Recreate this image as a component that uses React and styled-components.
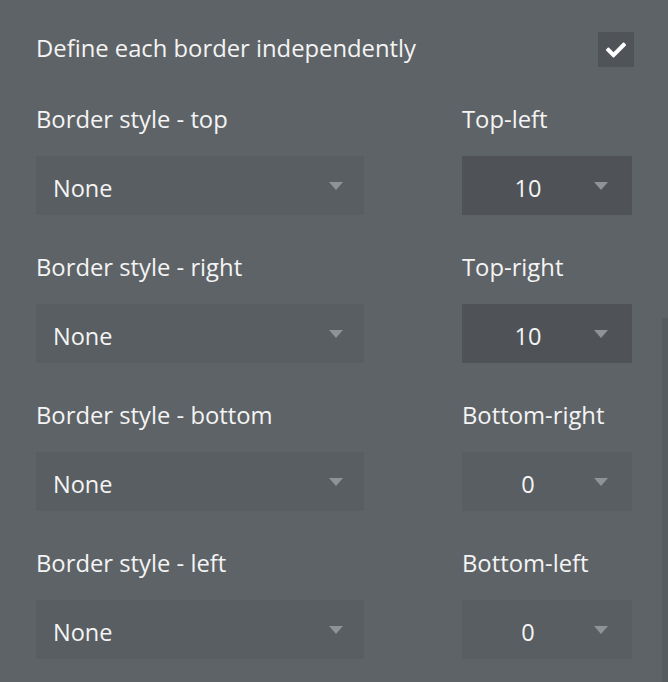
import React from 'react';
import styled, { createGlobalStyle } from 'styled-components';
import { FaCheck } from 'react-icons/fa';

const GlobalStyle = createGlobalStyle`
  html, body {
    margin: 0;
    padding: 0;
    background: #5e6367;
  }
  body {
    font-family: "Open Sans", "Noto Sans", sans-serif;
    color: #f4f4f4;
  }
`;

const Panel = styled.div`
  position: relative;
  width: 668px;
  height: 682px;
  box-sizing: border-box;
  padding: 32px 36px 0 36px;
  background: #5e6367;
  overflow: hidden;
`;

const Scrollbar = styled.div`
  position: absolute;
  right: 0;
  top: 318px;
  bottom: 0;
  width: 6px;
  background: #575b5f;
`;

const ToggleRow = styled.div`
  display: flex;
  align-items: center;
  justify-content: space-between;
  height: 35px;
  margin-bottom: 37px;
`;

const Label = styled.div`
  font-size: 23.8px;
  line-height: 30px;
  margin-top: ${p => (p.$raised ? '-3px' : '0')};
`;

const Checkbox = styled.div`
  width: 36px;
  height: 35px;
  margin-right: -2px;
  background: #505458;
  display: flex;
  align-items: center;
  justify-content: center;
  color: #fff;
  font-size: 20px;
`;

const Grid = styled.div`
  display: grid;
  grid-template-columns: 328px 170px;
  justify-content: space-between;
  row-gap: 37px;
`;

const Field = styled.div`
  display: flex;
  flex-direction: column;
  gap: 22px;
`;

const Select = styled.div`
  height: 59px;
  box-sizing: border-box;
  display: flex;
  align-items: center;
  background: ${p => (p.$dark ? '#4f5357' : '#595e62')};
  padding: 0 ${p => (p.$center ? '24px' : '21px')} 0 ${p => (p.$center ? '0' : '17px')};
  font-size: 23.5px;
`;

const Value = styled.span`
  flex: 1;
  text-align: ${p => (p.$center ? 'center' : 'left')};
  margin-top: 4px;
`;

const Arrow = styled.span`
  width: 0;
  height: 0;
  border-left: 7px solid transparent;
  border-right: 7px solid transparent;
  border-top: 8px solid #8f9396;
  margin-top: 1px;
`;

const rows = [
  { side: 'Border style - top', corner: 'Top-left', radius: '10', dark: true },
  { side: 'Border style - right', corner: 'Top-right', radius: '10', dark: true },
  { side: 'Border style - bottom', corner: 'Bottom-right', radius: '0', dark: false },
  { side: 'Border style - left', corner: 'Bottom-left', radius: '0', dark: false },
];

function Dropdown({ value, center, dark }) {
  return (
    <Select $center={center} $dark={dark}>
      <Value $center={center}>{value}</Value>
      <Arrow />
    </Select>
  );
}

export default function App() {
  return (
    <>
      <GlobalStyle />
      <Panel>
        <ToggleRow>
          <Label $raised>Define each border independently</Label>
          <Checkbox>
            <FaCheck />
          </Checkbox>
        </ToggleRow>
        <Grid>
          {rows.map(r => (
            <React.Fragment key={r.side}>
              <Field>
                <Label>{r.side}</Label>
                <Dropdown value="None" />
              </Field>
              <Field>
                <Label>{r.corner}</Label>
                <Dropdown value={r.radius} center dark={r.dark} />
              </Field>
            </React.Fragment>
          ))}
        </Grid>
        <Scrollbar />
      </Panel>
    </>
  );
}
